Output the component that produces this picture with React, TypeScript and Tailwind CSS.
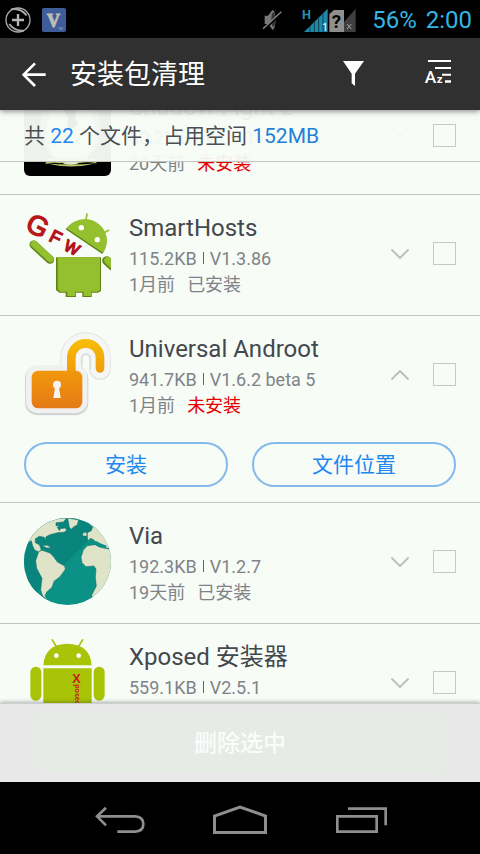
import React, { useState } from 'react';

interface Pacote {
  id: string;
  nome: string;
  tamanho: string;
  versao: string;
  data: string;
  instalado: boolean;
  icone: React.ReactNode;
}

const ShadowIcon = () => (
  <svg viewBox="72 -18 261 261" className="size-[87px] shrink-0 rounded-md" aria-hidden="true">
    <rect x="72" y="-18" width="261" height="261" fill="#000" />
    <rect x="72" y="-18" width="261" height="215" fill="#55584f" />
    <ellipse cx="212" cy="95" rx="90" ry="112" fill="#a9ad98" />
    <ellipse cx="212" cy="110" rx="74" ry="100" fill="#e3e7cc" />
    <path d="M136 207 Q160 200 180 205 Q215 196 240 204 Q265 199 290 205 L284 190 H142Z" fill="#b9c46a" />
    <path d="M136 205 Q215 224 290 205 Q215 212 136 205Z" fill="#b9c46a" />
    <path d="M190 -10 L235 -10 L240 30 L225 60 L232 90 L200 110 L205 70 L188 40Z" fill="#222" />
  </svg>
);

const SmartHostsIcon = () => (
  <svg viewBox="72 45 261 261" className="size-[87px] shrink-0" aria-hidden="true">
    <g stroke="#94bf2e" strokeLinecap="round">
      <path d="M257 80 L261 57 M305 117 L326 106" strokeWidth="5" />
      <path d="M101 149 L150 194" stroke="#5f8413" strokeWidth="25" />
      <path d="M102 147 L151 192" strokeWidth="20" />
      <path d="M320 197 L338 214" stroke="#5f8413" strokeWidth="27" />
      <path d="M323 196 L340 212" strokeWidth="21" />
    </g>
    <path d="M197 103 A66 64 0 0 1 307 177Z" fill="#5f8413" />
    <path d="M200 100 A66 64 0 0 1 309 173Z" fill="#94bf2e" />
    <circle cx="244" cy="98" r="8" fill="#fff" />
    <circle cx="292" cy="134" r="8" fill="#fff" />
    <path d="M168 187 H303 V288 L294 293 H275 V306 H247 V293 H228 V306 H197 V293 H178 L168 285Z" fill="#5f8413" />
    <path d="M173 187 H300 V286 L292 290 H273 V303 H251 V290 H226 V303 H202 V290 H180 L173 283Z" fill="#94bf2e" />
    <g fill="#c8151b" stroke="#b3151a" strokeWidth="4" fontFamily="Liberation Sans">
      <text transform="translate(72 103) rotate(27)" fontSize="82">G</text>
      <text transform="translate(144 136) rotate(27)" fontSize="54">F</text>
      <text transform="translate(188 163) rotate(27)" fontSize="48">W</text>
    </g>
  </svg>
);

const LockIcon = () => (
  <svg viewBox="72 48 261 261" className="size-[87px] shrink-0" aria-hidden="true">
    <defs>
      <linearGradient id="lockBody" x1="0" y1="0" x2="0" y2="1">
        <stop offset="0" stopColor="#f0980c" />
        <stop offset="1" stopColor="#e57a16" />
      </linearGradient>
      <linearGradient id="lockShackle" x1="0" y1="0" x2="0" y2="1">
        <stop offset="0" stopColor="#f6bb06" />
        <stop offset="1" stopColor="#f09a0c" />
      </linearGradient>
    </defs>
    <g fill="none" strokeLinecap="round">
      <path d="M214 185 V128 A42 42 0 0 1 300 128 V162" stroke="#e2e4e2" strokeWidth="66" />
      <rect x="75" y="152" width="190" height="149" rx="38" fill="#d3d5d4" />
      <path d="M214 185 V128 A42 42 0 0 1 300 128 V160" stroke="#f5f6f5" strokeWidth="61" />
      <rect x="78" y="152" width="184" height="142" rx="35" fill="#f1f1f1" />
      <path d="M245 150 V126 Q257 107 271 126 V160" stroke="#dcdedd" strokeWidth="5" />
      <path d="M214 175 V128 A42 42 0 0 1 300 128 V160" stroke="url(#lockShackle)" strokeWidth="26" />
    </g>
    <rect x="95" y="167" width="152" height="113" rx="20" fill="url(#lockBody)" />
    <circle cx="171" cy="209" r="12" fill="#f6f4ee" />
    <path d="M166 212 H176 L182 249 H160Z" fill="#f6f4ee" />
  </svg>
);

const GlobeIcon = () => (
  <svg viewBox="72 54 261 261" className="size-[87px] shrink-0" aria-hidden="true">
    <defs>
      <clipPath id="globe">
        <circle cx="202.5" cy="184.5" r="130.5" />
      </clipPath>
    </defs>
    <g clipPath="url(#globe)">
      <rect x="72" y="54" width="261" height="261" fill="#0b9186" />
      <path d="M72 54 H333 L110 277 L72 240Z" fill="#0a857d" />
      <g fill="#dfe3c8" stroke="#0b6c66" strokeWidth="1.5">
        <path d="M72 135 L94 122 L98 138 L104 150 L116 156 L124 150 L118 134 L106 128 L106 116 L118 109 L133 112 L136 122 L138 110 L150 104 L172 98 L192 97 L200 91 L196 84 L181 86 L178 92 L172 82 L180 76 L168 78 L168 68 L190 66 L200 54 L72 54Z" />
        <path d="M203 54 L236 60 L231 76 L221 80 L215 88 L208 82 L206 70Z" />
        <path d="M262 98 L274 92 L278 80 L266 72 L300 74 L325 110 L333 145 L318 144 L304 134 L285 128 L282 120 L272 115 L264 122 L262 112Z" />
        <path d="M249 98 L258 96 L262 108 L248 108Z" />
        <path d="M116 155 L126 151 L150 159 L162 172 L172 186 L194 198 L196 208 L180 230 L162 244 L156 262 L140 276 L135 287 L142 299 L128 288 L122 270 L126 235 L110 205 L107 182Z" />
        <path d="M262 137 L285 134 L300 142 L340 150 V260 L278 294 L275 286 L289 258 L286 232 L288 208 L282 198 L258 200 L246 188 L243 172 L250 150Z" />
        <path d="M126 136 L142 136 L154 143 L140 144Z" />
      </g>
      <path d="M272 121 L290 124 L304 131 L320 137 L318 144 L300 138 L282 132Z" fill="#0b9186" />
    </g>
  </svg>
);

const XposedIcon = () => (
  <svg viewBox="72 57 261 261" className="size-[87px] shrink-0" aria-hidden="true">
    <g fill="#a9c407">
      <path d="M130 136 Q134 72 202 71 Q271 72 275 136Z" />
      <rect x="91" y="140" width="33" height="102" rx="16" />
      <rect x="281" y="140" width="33" height="102" rx="16" />
      <path d="M130 145 H275 V290 Q275 302 262 302 H143 Q130 302 130 290Z" />
    </g>
    <path d="M156 58 L170 82 M249 58 L234 82" stroke="#a9c407" strokeWidth="5" />
    <circle cx="169" cy="107" r="7" fill="#fff" />
    <circle cx="236" cy="107" r="7" fill="#fff" />
    <g fill="#c8201e" fontFamily="Liberation Sans" fontWeight="bold">
      <text x="217" y="188" fontSize="38">X</text>
      <text transform="translate(226 193) rotate(90)" fontSize="21">posed</text>
    </g>
  </svg>
);

const pacotes: Pacote[] = [
  { id: 'shadow', nome: 'Shadow Fight 2', tamanho: '60.2MB', versao: 'V1.9.1', data: '20天前', instalado: false, icone: <ShadowIcon /> },
  { id: 'smarthosts', nome: 'SmartHosts', tamanho: '115.2KB', versao: 'V1.3.86', data: '1月前', instalado: true, icone: <SmartHostsIcon /> },
  { id: 'androot', nome: 'Universal Androot', tamanho: '941.7KB', versao: 'V1.6.2 beta 5', data: '1月前', instalado: false, icone: <LockIcon /> },
  { id: 'via', nome: 'Via', tamanho: '192.3KB', versao: 'V1.2.7', data: '19天前', instalado: true, icone: <GlobeIcon /> },
  { id: 'xposed', nome: 'Xposed 安装器', tamanho: '559.1KB', versao: 'V2.5.1', data: '1月前', instalado: true, icone: <XposedIcon /> }
];

const Caixa: React.FC<{ label: string }> = ({ label }) => (
  <input
    type="checkbox"
    aria-label={label}
    className="size-[23px] shrink-0 appearance-none border border-[#c6cac6] checked:bg-[#1e88e5]"
  />
);

// Barra de status do Android
const StatusBar = () => (
  <div className="flex h-[38px] shrink-0 items-center bg-black pt-0.5 pr-2 pl-[5px] text-2xl text-[#33b5e5]">
    <svg viewBox="15 19 78 78" className="size-[26px]" fill="none" stroke="#a9a9a9" aria-hidden="true">
      <circle cx="54" cy="58" r="36" strokeWidth="4" />
      <path d="M36 58 H72 M54 40 V76" stroke="#b5b5b5" strokeWidth="7" />
      <path d="M34 26 Q60 20 80 44 M28 70 Q44 92 72 90" strokeWidth="6" />
    </svg>
    <svg viewBox="126 21 72 72" className="ml-[11px] size-6" aria-hidden="true">
      <rect x="126" y="21" width="72" height="72" rx="6" fill="#3f5d9b" />
      <text x="141" y="77" fontSize="54" fontWeight="bold" fontFamily="Liberation Serif" fill="#bdbdb5" stroke="#bdbdb5" strokeWidth="3">V</text>
      <text x="174" y="87" fontSize="10" fontFamily="Liberation Sans" fill="#9fb0cf">TM</text>
    </svg>
    <div className="ml-auto flex items-center">
      <svg viewBox="72 27 63 66" className="mr-[18px] h-[22px] w-[21px]" aria-hidden="true">
        <path d="M80 47 H90 L103 30 Q111 30 113 58 Q112 86 104 90 L90 72 H80Z" fill="#777" />
        <ellipse cx="106" cy="59" rx="6" ry="22" fill="#333" />
        <path d="M76 89 L132 37" stroke="#000" strokeWidth="8" />
        <path d="M75 86 L130 35" stroke="#8a8a8a" strokeWidth="4" />
      </svg>
      <svg viewBox="186 18 81 75" className="h-[25px] w-[27px]" aria-hidden="true">
        <text x="189" y="51" fontSize="38" fontWeight="bold" fontFamily="Roboto" fill="#2a8fae">H</text>
        <path d="M195 90 L266 20 V90Z" fill="#2088a8" />
        <path d="M213 72 V90 M226 59 V90 M239 46 V90 M252 34 V90" stroke="#0c4252" strokeWidth="3" />
        <text x="250" y="87" fontSize="30" fontFamily="Roboto" fill="#fff">1</text>
      </svg>
      <svg viewBox="270 18 84 75" className="mr-4 h-[25px] w-7" aria-hidden="true">
        <path d="M318 60 L353 20 V90 H318Z" fill="#3f3f3f" />
        <path d="M274 90 V36 L288 24 H318 V90Z" fill="#8f8f8f" />
        <text x="281" y="78" fontSize="56" fontWeight="bold" fontFamily="Roboto" fill="#000">?</text>
        <path d="M327 66 L340 81 M340 66 L327 81" stroke="#a5a5a5" strokeWidth="3" />
      </svg>
      <span>56%</span>
      <span className="ml-[9px]">2:00</span>
    </div>
  </div>
);

const Header = () => (
  <header className="relative z-20 flex h-[72px] shrink-0 items-stretch bg-[#303030] text-white shadow-[0_1px_6px_rgba(0,0,0,0.5)]">
    <button aria-label="返回" className="flex w-17 items-center justify-center">
      <svg viewBox="66 184 72 75" className="h-[25px] w-6" fill="none" stroke="currentColor" strokeWidth="8" aria-hidden="true">
        <path d="M137 222 H72 M105 188 L71 222 L105 256" />
      </svg>
    </button>
    <h1 className="flex flex-1 items-center pt-0.5 pl-0.5 text-[27px]">安装包清理</h1>
    <button aria-label="筛选" className="flex w-21 items-center justify-center pr-0.5 pb-0.5">
      <svg viewBox="309 182 63 75" className="h-[25px] w-[21px]" fill="currentColor" aria-hidden="true">
        <path d="M309 182 H372 L345 220 V257 L335 249 V220Z" />
      </svg>
    </button>
    <button aria-label="排序" className="flex w-21 items-center justify-center pb-1">
      <svg viewBox="552 177 84 78" className="h-[26px] w-7" fill="currentColor" aria-hidden="true">
        <path d="M564 180 H633 V186 H564Z M585 201 H633 V207 H585Z M606 221 H633 V227 H606Z M615 241 H633 V248 H615Z" />
        <text x="554" y="250" fontSize="52" fontWeight="500" fontFamily="Roboto">A</text>
        <text x="590" y="250" fontSize="34" fontWeight="bold" fontFamily="Roboto">z</text>
      </svg>
    </button>
  </header>
);

const App: React.FC = () => {
  const [expandido, setExpandido] = useState('androot');

  return (
    <div className="flex h-screen flex-col overflow-hidden bg-[#f7fcf7] font-['Roboto','Noto_Sans_CJK_SC',sans-serif]">
      <StatusBar />
      <Header />

      <main className="relative min-h-0 flex-1 overflow-hidden">
        {/* Resumo */}
        <div className="absolute inset-x-0 top-0 z-10 flex h-[52px] items-center justify-between border-b border-[#bfc4bf] bg-[#f7fcf7]/94 px-6 text-[21px] text-[#4a4f54]">
          <p className="pt-0.5">
            共 <span className="text-[#1e88f0]">22</span> 个文件，占用空间 <span className="text-[#1e80d8]">152MB</span>
          </p>
          <Caixa label="全选" />
        </div>

        {/* Lista de pacotes, já rolada */}
        <ul className="-mt-9">
          {pacotes.map((p) => {
            const aberto = p.id === expandido;
            return (
              <li key={p.id} className="border-b border-[#bfc4bf] px-6">
                <div className="flex items-center pt-[15px] pb-[18px]">
                  {p.icone}
                  <div className="ml-[18px] h-[87px] min-w-0 flex-1 text-lg/[26px] text-[#7f8387]">
                    <h2 className="truncate text-2xl/9 text-[#43484d]">{p.nome}</h2>
                    <p className="flex">
                      {p.tamanho}
                      <span className="mx-1.5 mt-1.5 h-3 w-px bg-[#5f6468]" />
                      {p.versao}
                    </p>
                    <p className="flex gap-3">
                      <span>{p.data}</span>
                      <span className={p.instalado ? '' : 'text-[#e80000]'}>{p.instalado ? '已安装' : '未安装'}</span>
                    </p>
                  </div>
                  <button
                    aria-label={aberto ? '收起' : '展开'}
                    onClick={() => setExpandido(aberto ? '' : p.id)}
                    className="mr-6"
                  >
                    <svg
                      viewBox="0 0 18 10"
                      className={`h-2.5 w-[18px] ${aberto ? 'rotate-180' : ''}`}
                      fill="none"
                      stroke="#bdc0bd"
                      strokeWidth="2"
                      aria-hidden="true"
                    >
                      <path d="M0.5 0.5 L9 9 L17.5 0.5" />
                    </svg>
                  </button>
                  <Caixa label={p.nome} />
                </div>
                {aberto && (
                  <div className="mt-1.5 grid grid-cols-2 gap-6 pb-[15px] text-[21px] text-[#1e88f0]">
                    <button className="h-[45px] rounded-full border-2 border-[#84b9ec] pt-0.5">安装</button>
                    <button className="h-[45px] rounded-full border-2 border-[#84b9ec] pt-0.5">文件位置</button>
                  </div>
                )}
              </li>
            );
          })}
        </ul>
      </main>

      <footer className="relative z-10 flex h-[79px] shrink-0 border-t border-[#cdcfcd] bg-[#e8e8e8] px-9 py-[9px] shadow-[0_-1px_4px_rgba(0,0,0,0.3)]">
        <button disabled className="flex-1 rounded-md bg-[#e6ebe6] pt-0.5 text-[23px] font-medium text-[#fbfdfb]">
          删除选中
        </button>
      </footer>

      {/* Botões de navegação do sistema */}
      <nav className="relative z-10 grid h-18 shrink-0 grid-cols-3 bg-black px-15 text-[#8e8e8e]">
        <button aria-label="后退" className="flex items-center justify-center pt-1">
          <svg viewBox="285 558 150 84" className="h-7 w-[50px]" fill="none" stroke="currentColor" strokeWidth="8" aria-hidden="true">
            <path d="M318 563 L291 589 L318 616 M292 589 H405 Q430 590 430 612 Q430 634 405 635 H352" />
          </svg>
        </button>
        <button aria-label="主页" className="flex items-center justify-center pt-1">
          <svg viewBox="0 0 54 30" className="h-[30px] w-[54px]" fill="none" stroke="currentColor" strokeWidth="3" aria-hidden="true">
            <path d="M1.5 27.5 V11 L27 2 L52.5 11 V27.5Z" />
          </svg>
        </button>
        <button aria-label="最近任务" className="flex items-center justify-center pt-1 pl-0.5">
          <svg viewBox="288 558 153 84" className="h-7 w-[51px]" fill="none" stroke="currentColor" strokeWidth="8" aria-hidden="true">
            <path d="M292 589 H410 V635 H292Z M324 566 H437 V616" />
          </svg>
        </button>
      </nav>
    </div>
  );
};

export default App;
